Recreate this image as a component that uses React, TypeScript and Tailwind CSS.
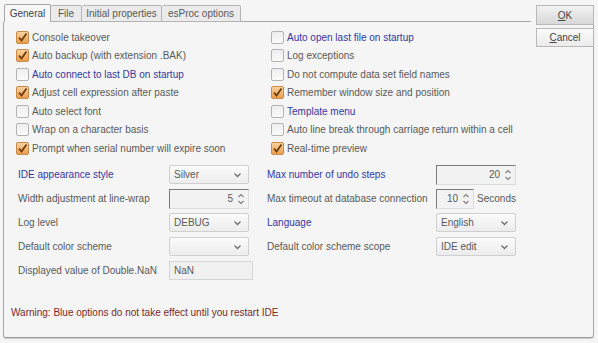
import React from "react"

const font = { fontFamily: '"Liberation Sans", Arial, sans-serif' }

type Opt = { label: string; checked?: boolean; blue?: boolean }

const leftOpts: Opt[] = [
  { label: "Console takeover", checked: true },
  { label: "Auto backup (with extension .BAK)", checked: true },
  { label: "Auto connect to last DB on startup", blue: true },
  { label: "Adjust cell expression after paste", checked: true },
  { label: "Auto select font" },
  { label: "Wrap on a character basis" },
  { label: "Prompt when serial number will expire soon", checked: true },
]

const rightOpts: Opt[] = [
  { label: "Auto open last file on startup", blue: true },
  { label: "Log exceptions" },
  { label: "Do not compute data set field names" },
  { label: "Remember window size and position", checked: true },
  { label: "Template menu", blue: true },
  { label: "Auto line break through carriage return within a cell" },
  { label: "Real-time preview", checked: true },
]

const Check = ({ checked }: { checked?: boolean }) =>
  checked ? (
    <span className="flex h-[13px] w-[13px] shrink-0 items-center justify-center rounded-[2px] border border-[#c98a45] bg-gradient-to-b from-[#fbd3a0] to-[#eb9c4a]">
      <svg width="11" height="11" viewBox="0 0 11 11">
        <path d="M2 5.5 L4.5 8.5 L9.5 1.5" fill="none" stroke="#6b3d10" strokeWidth="1.8" />
      </svg>
    </span>
  ) : (
    <span className="h-[13px] w-[13px] shrink-0 rounded-[2px] border border-[#b4b4b4] bg-gradient-to-b from-[#eeeeee] to-[#fbfbfb]" />
  )

const CheckRow = ({ label, checked, blue }: Opt) => (
  <div className="flex h-[18.5px] items-center gap-[3px] whitespace-nowrap">
    <Check checked={checked} />
    <span className={blue ? "text-[#3535a0]" : "text-[#595959]"}>{label}</span>
  </div>
)

const Chevron = () => (
  <svg width="9" height="6" viewBox="0 0 9 6">
    <path d="M1.5 1.5 L4.5 4.5 L7.5 1.5" fill="none" stroke="#707070" strokeWidth="1.3" />
  </svg>
)

const Arrows = () => (
  <svg width="8" height="14" viewBox="0 0 8 14">
    <path d="M1.5 5 L4 2.5 L6.5 5" fill="none" stroke="#808080" strokeWidth="1.2" />
    <path d="M1.5 9 L4 11.5 L6.5 9" fill="none" stroke="#808080" strokeWidth="1.2" />
  </svg>
)

const Select = ({ value }: { value: string }) => (
  <div className="flex h-[19px] w-[80px] items-center justify-between rounded-[2px] border border-[#cfcfcf] bg-gradient-to-b from-[#fbfbfb] to-[#ececec] pl-[4px] pr-[6px] text-[#595959]">
    <span>{value}</span>
    <Chevron />
  </div>
)

const Spinner = ({ value, w }: { value: string; w: string }) => (
  <div className={`flex h-[20px] ${w} items-center justify-end gap-[4px] border border-[#dcdcdc] border-l-[#7a7a7a] border-t-[#7a7a7a] bg-[#f2f2f2] pr-[3px] text-[#595959]`}>
    <span>{value}</span>
    <Arrows />
  </div>
)

const Label = ({ children, blue }: { children: React.ReactNode; blue?: boolean }) => (
  <span className={`whitespace-nowrap ${blue ? "text-[#3535a0]" : "text-[#595959]"}`}>{children}</span>
)

const tabs = [
  { label: "File", w: "w-[31px]" },
  { label: "Initial properties", w: "w-[80px]" },
  { label: "esProc options", w: "w-[79px]" },
]

export default function App() {
  return (
    <div style={font} className="h-[343px] w-[598px] bg-[#f4f5f4] pl-[3px] pr-[4px] pt-[4px] text-[10px]">
      <div className="flex h-[18px]">
        <div className="flex shrink-0 items-end pl-[1px]">
          <div className="flex h-[18px] w-[47px] items-center justify-center rounded-t-[2px] border border-b-0 border-[#a8a8a8] bg-[#f7f7f7] text-[#444444]">General</div>
          {tabs.map((t) => (
            <div key={t.label} className={`flex h-[17px] ${t.w} items-center justify-center whitespace-nowrap rounded-t-[2px] border border-l-0 border-[#b4b4b4] bg-[#ebebeb] text-[#595959]`}>
              {t.label}
            </div>
          ))}
        </div>
        <div className="flex-1 border-b border-[#a8a8a8]" />
        <div className="ml-[5px] flex h-[18px] w-[58px] flex-col gap-[3px] pt-[1px]">
          <div className="flex h-[20px] shrink-0 items-center justify-center border border-[#b8b8b8] bg-gradient-to-b from-[#f2f2f2] to-[#d8d8d8] text-[#444444]">
            <span><u>O</u>K</span>
          </div>
          <div className="flex h-[19px] shrink-0 items-center justify-center border border-[#b8b8b8] bg-gradient-to-b from-[#fafafa] to-[#ebebeb] text-[#444444]">
            <span><u>C</u>ancel</span>
          </div>
        </div>
      </div>
      <div className="h-[316px] rounded-b-[3px] border border-t-0 border-[#a8a8a8] border-b-[#9a9a9a] shadow-[0_1px_1px_#c8c8c8]">
        <div className="grid grid-cols-[255px_1fr] pl-[12px] pt-[6px]">
          <div className="flex flex-col">
            {leftOpts.map((o) => (
              <CheckRow key={o.label} {...o} />
            ))}
          </div>
          <div className="flex flex-col">
            {rightOpts.map((o) => (
              <CheckRow key={o.label} {...o} />
            ))}
          </div>
        </div>
        <div className="mt-[5px] grid grid-cols-[151px_80px_18px_169px_80px] grid-rows-[repeat(5,24px)] items-center pl-[14px]">
          <Label blue>IDE appearance style</Label>
          <Select value="Silver" />
          <span />
          <Label blue>Max number of undo steps</Label>
          <Spinner value="20" w="w-[80px]" />

          <Label>Width adjustment at line-wrap</Label>
          <Spinner value="5" w="w-[80px]" />
          <span />
          <Label>Max timeout at database connection</Label>
          <div className="flex items-center gap-[3px]">
            <Spinner value="10" w="w-[40px]" />
            <span className="text-[#595959]">Seconds</span>
          </div>

          <Label>Log level</Label>
          <Select value="DEBUG" />
          <span />
          <Label blue>Language</Label>
          <Select value="English" />

          <Label>Default color scheme</Label>
          <Select value="" />
          <span />
          <Label>Default color scheme scope</Label>
          <Select value="IDE edit" />

          <Label>Displayed value of Double.NaN</Label>
          <div className="flex h-[19px] w-[84px] items-center border border-[#d6d6d6] bg-[#f1f1f1] pl-[4px] text-[#595959]">NaN</div>
        </div>
        <div className="mt-[22px] pl-[7px] text-[#7a2a2a]">Warning: Blue options do not take effect until you restart IDE</div>
      </div>
    </div>
  )
}
